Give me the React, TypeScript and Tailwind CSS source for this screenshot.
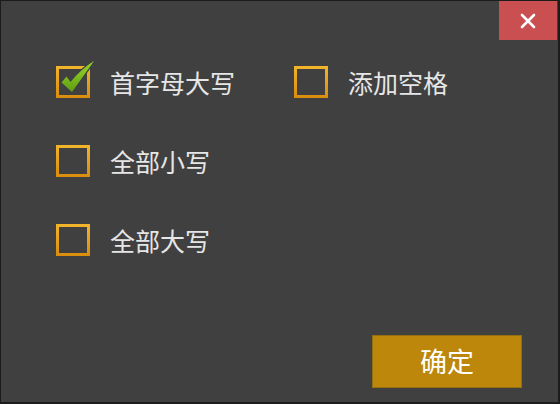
import { useState } from 'react';

// ── Options ───────────────────────────────────────────────────────────────────

interface CaseOption {
  id: string;
  label: string;
}

const leftOptions: CaseOption[] = [
  { id: 'capitalize', label: '首字母大写' },
  { id: 'lower', label: '全部小写' },
  { id: 'upper', label: '全部大写' },
];

const font = { fontFamily: '"Microsoft YaHei", "Noto Sans CJK SC", sans-serif' };

// ── Checkbox ──────────────────────────────────────────────────────────────────

function Box({ checked }: { checked: boolean }) {
  return (
    <span className="relative block h-[32px] w-[34px] shrink-0">
      <span className="block h-full w-full bg-gradient-to-b from-[#f2b52a] to-[#d98d0b] p-[3px]">
        <span className="block h-full w-full bg-[#404040]" />
      </span>
      {checked && (
        <svg
          className="absolute left-0 top-0 overflow-visible"
          width="34"
          height="32"
          viewBox="0 0 34 32"
        >
          <defs>
            <linearGradient id="tick" x1="0" y1="0" x2="0" y2="1">
              <stop offset="0" stopColor="#9bd629" />
              <stop offset="1" stopColor="#5e9e12" />
            </linearGradient>
          </defs>
          <path
            d="M5.5 16.5 L10.5 10.5 L14.5 16 Q25 3 38 -5 Q31 5 16 26 Z"
            fill="url(#tick)"
            stroke="#404040"
            strokeWidth="2.5"
            strokeLinejoin="round"
            style={{ paintOrder: 'stroke' }}
          />
        </svg>
      )}
    </span>
  );
}

function CheckRow({
  label,
  checked,
  onToggle,
  className = '',
}: {
  label: string;
  checked: boolean;
  onToggle: () => void;
  className?: string;
}) {
  return (
    <button
      type="button"
      onClick={onToggle}
      className={`flex h-[32px] items-center gap-[20px] text-left ${className}`}
    >
      <Box checked={checked} />
      <span className="text-[25px] leading-none text-[#e6e6e6]" style={font}>
        {label}
      </span>
    </button>
  );
}

// ── Dialog ────────────────────────────────────────────────────────────────────

export default function App() {
  const [mode, setMode] = useState('capitalize');
  const [spaces, setSpaces] = useState(false);

  return (
    <div className="flex h-[404px] w-[560px] flex-col border-b-2 border-l border-r-2 border-t border-[#1c1c1c] bg-[#404040]">
      {/* Title bar */}
      <div className="flex justify-end pr-[1px]">
        <button
          type="button"
          className="flex h-[39px] w-[58px] items-center justify-center bg-[#c94f50]"
          aria-label="关闭"
        >
          <svg width="16" height="16" viewBox="0 0 16 16">
            <path d="M2 2 L14 14 M14 2 L2 14" stroke="#fff" strokeWidth="2.6" strokeLinecap="round" />
          </svg>
        </button>
      </div>

      {/* Options */}
      <div className="flex flex-col gap-[47px] pl-[55px] pt-[26px]">
        <div className="flex">
          <CheckRow
            label={leftOptions[0].label}
            checked={mode === leftOptions[0].id}
            onToggle={() => setMode(leftOptions[0].id)}
            className="w-[238px]"
          />
          <CheckRow label="添加空格" checked={spaces} onToggle={() => setSpaces(!spaces)} />
        </div>
        {leftOptions.slice(1).map((o) => (
          <CheckRow key={o.id} label={o.label} checked={mode === o.id} onToggle={() => setMode(o.id)} />
        ))}
      </div>

      {/* Footer */}
      <div className="mt-auto flex justify-end pb-[14px] pr-[36px]">
        <button
          type="button"
          className="flex h-[53px] w-[150px] items-center justify-center border border-[#96700f] bg-[#bd870b] text-[27px] text-white"
          style={font}
        >
          确定
        </button>
      </div>
    </div>
  );
}
